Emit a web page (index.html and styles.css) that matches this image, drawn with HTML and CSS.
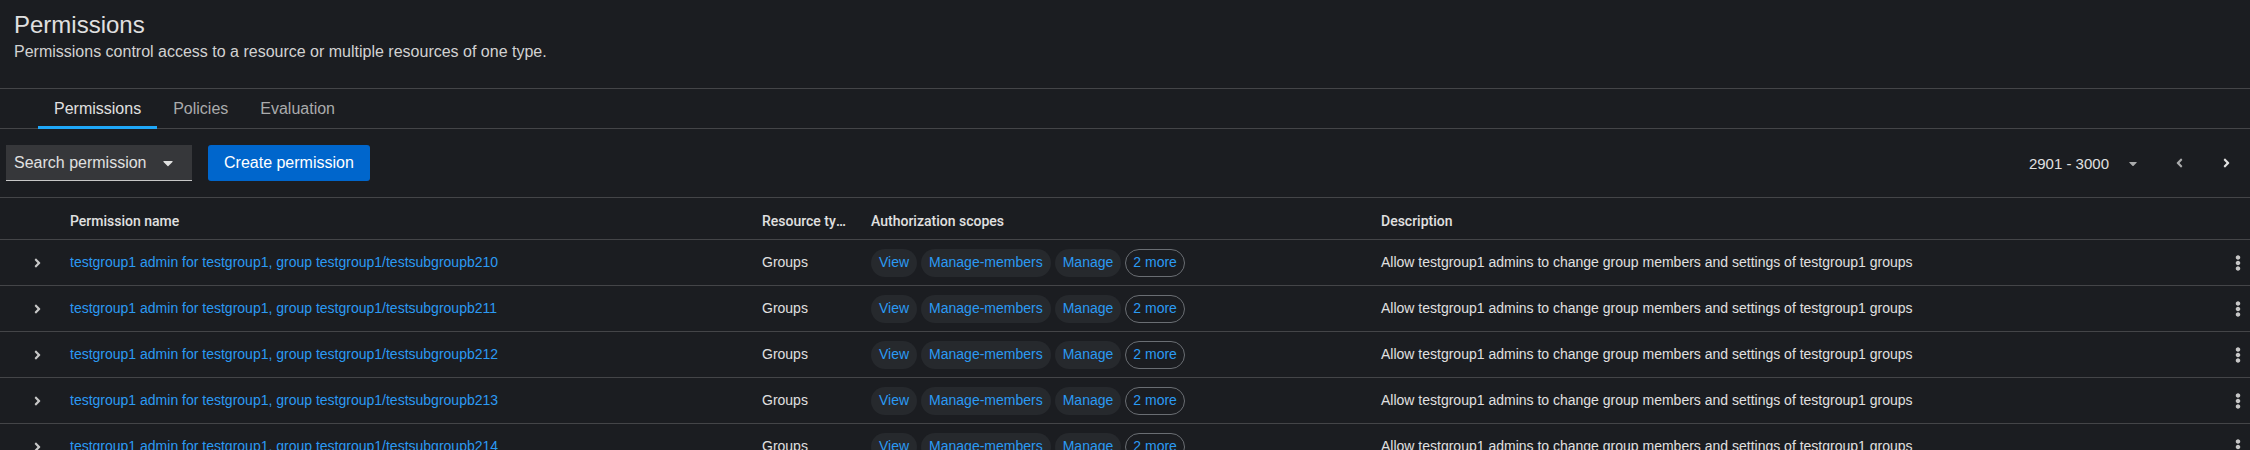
FILE: index.html
```html
<!DOCTYPE html>
<html lang="en">
<head>
<meta charset="utf-8">
<title>Permissions</title>
<link rel="stylesheet" href="styles.css">
</head>
<body>
<header class="page-header">
  <h1 class="title">Permissions</h1>
  <p class="subtitle">Permissions control access to a resource or multiple resources of one type.</p>
</header>

<nav class="tabs">
  <a class="tab active">Permissions</a>
  <a class="tab">Policies</a>
  <a class="tab">Evaluation</a>
</nav>

<div class="toolbar">
  <div class="toolbar-left">
    <button class="search-select">
      <span>Search permission</span>
      <svg class="caret" viewBox="0 0 320 512" width="10" height="16"><path d="M31.3 192h257.3c17.8 0 26.7 21.5 14.1 34.1L174.1 354.8c-7.8 7.8-20.5 7.8-28.3 0L17.2 226.1C4.6 213.5 13.5 192 31.3 192z"/></svg>
    </button>
    <button class="btn-primary">Create permission</button>
  </div>
  <div class="pagination">
    <button class="page-toggle">
      <span>2901 - 3000</span>
      <svg class="caret-sm" viewBox="0 0 320 512" width="8" height="13"><path d="M31.3 192h257.3c17.8 0 26.7 21.5 14.1 34.1L174.1 354.8c-7.8 7.8-20.5 7.8-28.3 0L17.2 226.1C4.6 213.5 13.5 192 31.3 192z"/></svg>
    </button>
    <button class="nav-btn prev"><svg viewBox="0 0 256 512" width="7" height="14"><path d="M31.7 239l136-136c9.4-9.4 24.6-9.4 33.9 0l22.6 22.6c9.4 9.4 9.4 24.6 0 33.9L127.9 256l96.4 96.4c9.4 9.4 9.4 24.6 0 33.9L201.7 409c-9.4 9.4-24.6 9.4-33.9 0l-136-136c-9.5-9.4-9.5-24.6-.1-34z"/></svg></button>
    <button class="nav-btn next"><svg viewBox="0 0 256 512" width="7" height="14"><path d="M224.3 273l-136 136c-9.4 9.4-24.6 9.4-33.9 0l-22.6-22.6c-9.4-9.4-9.4-24.6 0-33.9l96.4-96.4-96.4-96.4c-9.4-9.4-9.4-24.6 0-33.9L54.3 103c9.4-9.4 24.6-9.4 33.9 0l136 136c9.5 9.4 9.5 24.6.1 34z"/></svg></button>
  </div>
</div>

<div class="table">
  <div class="row head">
    <div class="cell"></div>
    <div class="cell">Permission name</div>
    <div class="cell trunc">Resource type</div>
    <div class="cell">Authorization scopes</div>
    <div class="cell">Description</div>
    <div class="cell"></div>
  </div>

  <div class="row">
    <div class="cell toggle"><svg viewBox="0 0 256 512" width="7" height="14"><path d="M224.3 273l-136 136c-9.4 9.4-24.6 9.4-33.9 0l-22.6-22.6c-9.4-9.4-9.4-24.6 0-33.9l96.4-96.4-96.4-96.4c-9.4-9.4-9.4-24.6 0-33.9L54.3 103c9.4-9.4 24.6-9.4 33.9 0l136 136c9.5 9.4 9.5 24.6.1 34z"/></svg></div>
    <div class="cell"><a class="link">testgroup1 admin for testgroup1, group testgroup1/testsubgroupb210</a></div>
    <div class="cell">Groups</div>
    <div class="cell chips"><span class="chip">View</span><span class="chip">Manage-members</span><span class="chip">Manage</span><span class="chip more">2 more</span></div>
    <div class="cell">Allow testgroup1 admins to change group members and settings of testgroup1 groups</div>
    <div class="cell kebab"><svg viewBox="0 0 192 512" width="6" height="16"><path d="M96 184c39.8 0 72 32.2 72 72s-32.2 72-72 72-72-32.2-72-72 32.2-72 72-72zM24 80c0 39.8 32.2 72 72 72s72-32.2 72-72S135.8 8 96 8 24 40.2 24 80zm0 352c0 39.8 32.2 72 72 72s72-32.2 72-72-32.2-72-72-72-72 32.2-72 72z"/></svg></div>
  </div>

  <div class="row">
    <div class="cell toggle"><svg viewBox="0 0 256 512" width="7" height="14"><path d="M224.3 273l-136 136c-9.4 9.4-24.6 9.4-33.9 0l-22.6-22.6c-9.4-9.4-9.4-24.6 0-33.9l96.4-96.4-96.4-96.4c-9.4-9.4-9.4-24.6 0-33.9L54.3 103c9.4-9.4 24.6-9.4 33.9 0l136 136c9.5 9.4 9.5 24.6.1 34z"/></svg></div>
    <div class="cell"><a class="link">testgroup1 admin for testgroup1, group testgroup1/testsubgroupb211</a></div>
    <div class="cell">Groups</div>
    <div class="cell chips"><span class="chip">View</span><span class="chip">Manage-members</span><span class="chip">Manage</span><span class="chip more">2 more</span></div>
    <div class="cell">Allow testgroup1 admins to change group members and settings of testgroup1 groups</div>
    <div class="cell kebab"><svg viewBox="0 0 192 512" width="6" height="16"><path d="M96 184c39.8 0 72 32.2 72 72s-32.2 72-72 72-72-32.2-72-72 32.2-72 72-72zM24 80c0 39.8 32.2 72 72 72s72-32.2 72-72S135.8 8 96 8 24 40.2 24 80zm0 352c0 39.8 32.2 72 72 72s72-32.2 72-72-32.2-72-72-72-72 32.2-72 72z"/></svg></div>
  </div>

  <div class="row">
    <div class="cell toggle"><svg viewBox="0 0 256 512" width="7" height="14"><path d="M224.3 273l-136 136c-9.4 9.4-24.6 9.4-33.9 0l-22.6-22.6c-9.4-9.4-9.4-24.6 0-33.9l96.4-96.4-96.4-96.4c-9.4-9.4-9.4-24.6 0-33.9L54.3 103c9.4-9.4 24.6-9.4 33.9 0l136 136c9.5 9.4 9.5 24.6.1 34z"/></svg></div>
    <div class="cell"><a class="link">testgroup1 admin for testgroup1, group testgroup1/testsubgroupb212</a></div>
    <div class="cell">Groups</div>
    <div class="cell chips"><span class="chip">View</span><span class="chip">Manage-members</span><span class="chip">Manage</span><span class="chip more">2 more</span></div>
    <div class="cell">Allow testgroup1 admins to change group members and settings of testgroup1 groups</div>
    <div class="cell kebab"><svg viewBox="0 0 192 512" width="6" height="16"><path d="M96 184c39.8 0 72 32.2 72 72s-32.2 72-72 72-72-32.2-72-72 32.2-72 72-72zM24 80c0 39.8 32.2 72 72 72s72-32.2 72-72S135.8 8 96 8 24 40.2 24 80zm0 352c0 39.8 32.2 72 72 72s72-32.2 72-72-32.2-72-72-72-72 32.2-72 72z"/></svg></div>
  </div>

  <div class="row">
    <div class="cell toggle"><svg viewBox="0 0 256 512" width="7" height="14"><path d="M224.3 273l-136 136c-9.4 9.4-24.6 9.4-33.9 0l-22.6-22.6c-9.4-9.4-9.4-24.6 0-33.9l96.4-96.4-96.4-96.4c-9.4-9.4-9.4-24.6 0-33.9L54.3 103c9.4-9.4 24.6-9.4 33.9 0l136 136c9.5 9.4 9.5 24.6.1 34z"/></svg></div>
    <div class="cell"><a class="link">testgroup1 admin for testgroup1, group testgroup1/testsubgroupb213</a></div>
    <div class="cell">Groups</div>
    <div class="cell chips"><span class="chip">View</span><span class="chip">Manage-members</span><span class="chip">Manage</span><span class="chip more">2 more</span></div>
    <div class="cell">Allow testgroup1 admins to change group members and settings of testgroup1 groups</div>
    <div class="cell kebab"><svg viewBox="0 0 192 512" width="6" height="16"><path d="M96 184c39.8 0 72 32.2 72 72s-32.2 72-72 72-72-32.2-72-72 32.2-72 72-72zM24 80c0 39.8 32.2 72 72 72s72-32.2 72-72S135.8 8 96 8 24 40.2 24 80zm0 352c0 39.8 32.2 72 72 72s72-32.2 72-72-32.2-72-72-72-72 32.2-72 72z"/></svg></div>
  </div>

  <div class="row">
    <div class="cell toggle"><svg viewBox="0 0 256 512" width="7" height="14"><path d="M224.3 273l-136 136c-9.4 9.4-24.6 9.4-33.9 0l-22.6-22.6c-9.4-9.4-9.4-24.6 0-33.9l96.4-96.4-96.4-96.4c-9.4-9.4-9.4-24.6 0-33.9L54.3 103c9.4-9.4 24.6-9.4 33.9 0l136 136c9.5 9.4 9.5 24.6.1 34z"/></svg></div>
    <div class="cell"><a class="link">testgroup1 admin for testgroup1, group testgroup1/testsubgroupb214</a></div>
    <div class="cell">Groups</div>
    <div class="cell chips"><span class="chip">View</span><span class="chip">Manage-members</span><span class="chip">Manage</span><span class="chip more">2 more</span></div>
    <div class="cell">Allow testgroup1 admins to change group members and settings of testgroup1 groups</div>
    <div class="cell kebab"><svg viewBox="0 0 192 512" width="6" height="16"><path d="M96 184c39.8 0 72 32.2 72 72s-32.2 72-72 72-72-32.2-72-72 32.2-72 72-72zM24 80c0 39.8 32.2 72 72 72s72-32.2 72-72S135.8 8 96 8 24 40.2 24 80zm0 352c0 39.8 32.2 72 72 72s72-32.2 72-72-32.2-72-72-72-72 32.2-72 72z"/></svg></div>
  </div>
</div>
</body>
</html>
```

FILE: styles.css
```css
* { box-sizing: border-box; }

html, body {
  margin: 0;
  padding: 0;
  overflow: hidden;
  background: #1b1d21;
}

body {
  font-family: "Liberation Sans", Arial, sans-serif;
  color: #e0e0e0;
  font-size: 14px;
  line-height: 21px;
}

button {
  font-family: inherit;
  border: none;
  background: none;
  color: inherit;
  padding: 0;
  cursor: pointer;
}

/* Page header */
.page-header {
  padding: 9px 14px 24px;
  border-bottom: 1px solid #444548;
}

.title {
  margin: 0;
  font-size: 24px;
  line-height: 31px;
  font-weight: 400;
  color: #e0e0e0;
}

.subtitle {
  margin: 0;
  font-size: 16px;
  line-height: 24px;
  color: #d2d2d2;
}

/* Tabs */
.tabs {
  display: flex;
  padding-left: 38px;
  border-bottom: 1px solid #444548;
}

.tab {
  position: relative;
  padding: 8px 16px 7px;
  font-size: 16px;
  line-height: 24px;
  color: #aaabac;
}

.tab.active {
  color: #e0e0e0;
}

.tab.active::after {
  content: "";
  position: absolute;
  left: 0;
  right: 0;
  bottom: -1px;
  height: 3px;
  background: #1fa7f8;
}

/* Toolbar */
.toolbar {
  display: flex;
  align-items: center;
  justify-content: space-between;
  padding: 16px 0 16px 6px;
  border-bottom: 1px solid #444548;
}

.toolbar-left {
  display: flex;
  align-items: center;
  gap: 16px;
}

.search-select {
  display: flex;
  align-items: center;
  justify-content: space-between;
  width: 186px;
  height: 36px;
  padding: 0 19px 0 8px;
  background: #36373a;
  border-bottom: 1px solid #c7c7c7;
  font-size: 16px;
  color: #e0e0e0;
}

.caret { fill: #e0e0e0; }

.btn-primary {
  height: 36px;
  padding: 0 16px;
  background: #0066cc;
  border-radius: 3px;
  font-size: 16px;
  color: #fff;
}

.pagination {
  display: flex;
  align-items: center;
  height: 36px;
}

.page-toggle {
  display: flex;
  align-items: center;
  gap: 20px;
  font-size: 15px;
  color: #e0e0e0;
  margin-right: 19px;
}

.caret-sm { fill: #aaabac; }

.nav-btn {
  width: 47px;
  height: 36px;
  display: flex;
  align-items: center;
  justify-content: center;
}

.nav-btn.prev svg { fill: #aaabac; }
.nav-btn.next svg { fill: #e0e0e0; }

/* Table */
.row {
  display: grid;
  grid-template-columns: 70px 692px 109px 510px 1fr 36px;
  height: 46px;
  align-items: center;
  border-bottom: 1px solid #444548;
}

.row.head {
  height: 42px;
  align-items: start;
  padding-top: 13px;
  font-family: Roboto, "Liberation Sans", Arial, sans-serif;
  font-weight: 500;
  font-size: 14px;
}

.cell {
  white-space: nowrap;
}

.trunc {
  overflow: hidden;
  text-overflow: ellipsis;
  padding-right: 24px;
}

.toggle {
  display: flex;
  align-items: center;
  padding-left: 34px;
}

.toggle svg { fill: #c7c7c7; }

.link {
  color: #2b9af3;
  text-decoration: none;
}

.chips {
  display: flex;
  gap: 4px;
}

.chip {
  display: inline-flex;
  align-items: center;
  height: 28px;
  padding: 0 8px;
  border-radius: 14px;
  background: #26292d;
  color: #2b9af3;
}

.chip.more {
  background: transparent;
  border: 1px solid #6a6e73;
  padding: 0 7px;
}

.kebab {
  display: flex;
  align-items: center;
  padding-left: 21px;
}

.kebab svg { fill: #c7c7c7; }
```
